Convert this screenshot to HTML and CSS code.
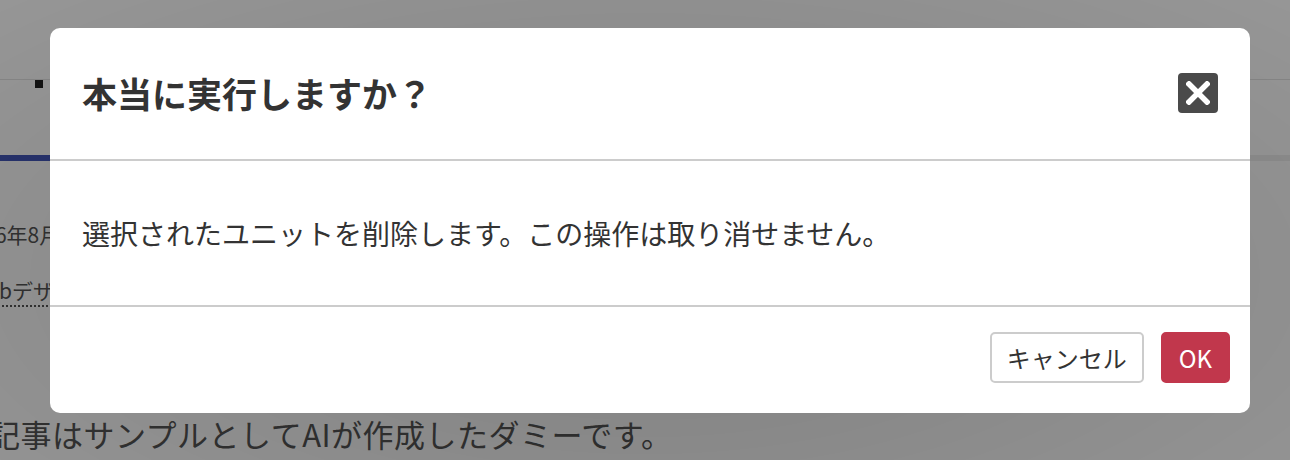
FILE: index.html
```html
<!DOCTYPE html>
<html lang="ja">
<head>
    <meta charset="UTF-8">
    <meta name="viewport" content="width=device-width, initial-scale=1.0">
    <title>ユニット管理</title>
    <link rel="stylesheet" href="styles.css">
</head>
<body>
    <header class="site-header"></header>
    <nav class="tabs">
        <div class="tab active"><span class="tab-mark"></span></div>
    </nav>
    <main class="content">
        <p class="post-date">2026年8月15日</p>
        <p class="post-tag"><a href="#" class="tag-link">Webデザイン</a></p>
        <p class="post-note">この記事はサンプルとしてAIが作成したダミーです。</p>
    </main>

    <div class="overlay">
        <div class="modal" role="dialog" aria-labelledby="modalTitle">
            <div class="modal-header">
                <h2 id="modalTitle" class="modal-title">本当に実行しますか？</h2>
                <button type="button" class="modal-close" aria-label="閉じる">
                    <svg width="24" height="24" viewBox="0 0 24 24">
                        <path d="M3 3 L21 21 M21 3 L3 21" stroke="#fff" stroke-width="5.5" stroke-linecap="square" fill="none"/>
                    </svg>
                </button>
            </div>
            <div class="modal-body">
                <p>選択されたユニットを削除します。この操作は取り消せません。</p>
            </div>
            <div class="modal-footer">
                <button type="button" class="btn btn-cancel">キャンセル</button>
                <button type="button" class="btn btn-ok">OK</button>
            </div>
        </div>
    </div>
</body>
</html>
```

FILE: styles.css
```css
body {
    font-family: "Noto Sans CJK JP", "Noto Sans", sans-serif;
    margin: 0;
    padding: 0;
    background-color: #fff;
    color: #555;
    overflow: hidden;
}

.site-header {
    height: 80px;
    border-bottom: 1px solid #e4e4e4;
    box-sizing: border-box;
}

.tabs {
    height: 81px;
    border-bottom: 6px solid #f0f0f0;
    box-sizing: border-box;
    display: flex;
}

.tab {
    width: 130px;
    height: 81px;
    box-sizing: border-box;
    padding-left: 35px;
}

.tab.active {
    border-bottom: 6px solid #4356b8;
}

.tab-mark {
    display: block;
    width: 8px;
    height: 8px;
    background-color: #222;
}

.content {
    margin-left: -40px;
}

.content p {
    margin: 0;
}

.post-date {
    margin-top: 57px !important;
    font-size: 21px;
    line-height: 32px;
}

.post-tag {
    margin-top: 25px !important;
    margin-left: 9px !important;
    font-size: 21px;
}

.tag-link {
    display: inline-block;
    line-height: 30px;
    color: #555;
    text-decoration: none;
    border-bottom: 2px dotted #555;
}

.post-note {
    margin-top: 105px !important;
    margin-left: -34px !important;
    font-size: 31px;
    line-height: 44px;
    letter-spacing: 0.5px;
}

.overlay {
    position: fixed;
    inset: 0;
    background: radial-gradient(ellipse at 50% 60%, rgba(0, 0, 0, 0.5), rgba(0, 0, 0, 0.41));
    display: flex;
    justify-content: center;
    align-items: flex-start;
    padding: 28px 0 0 10px;
}

.modal {
    width: 1200px;
    background-color: #fff;
    border-radius: 10px;
    color: #333;
}

.modal-header {
    display: flex;
    align-items: center;
    justify-content: space-between;
    padding: 44px 32px 45px 32px;
    border-bottom: 2px solid #cccccc;
}

.modal-title {
    margin: 0;
    font-size: 35px;
    line-height: 42px;
    font-weight: bold;
    color: #333;
}

.modal-close {
    width: 40px;
    height: 40px;
    padding: 0;
    border: none;
    border-radius: 4px;
    background-color: #4a4a4a;
    display: flex;
    align-items: center;
    justify-content: center;
    cursor: pointer;
}

.modal-body {
    padding: 51px 32px;
    border-bottom: 2px solid #cccccc;
}

.modal-body p {
    margin: 0;
    font-size: 28px;
    line-height: 42px;
}

.modal-footer {
    display: flex;
    justify-content: flex-end;
    gap: 17px;
    padding: 25px 20px 30px 20px;
}

.btn {
    height: 51px;
    padding: 0 15px;
    font-family: inherit;
    font-size: 24px;
    border-radius: 5px;
    cursor: pointer;
}

.btn-cancel {
    background-color: #fff;
    color: #333;
    border: 2px solid #cccccc;
}

.btn-ok {
    background-color: #c1374c;
    color: #fff;
    border: 2px solid #c1374c;
    padding: 0 16px;
}
```
